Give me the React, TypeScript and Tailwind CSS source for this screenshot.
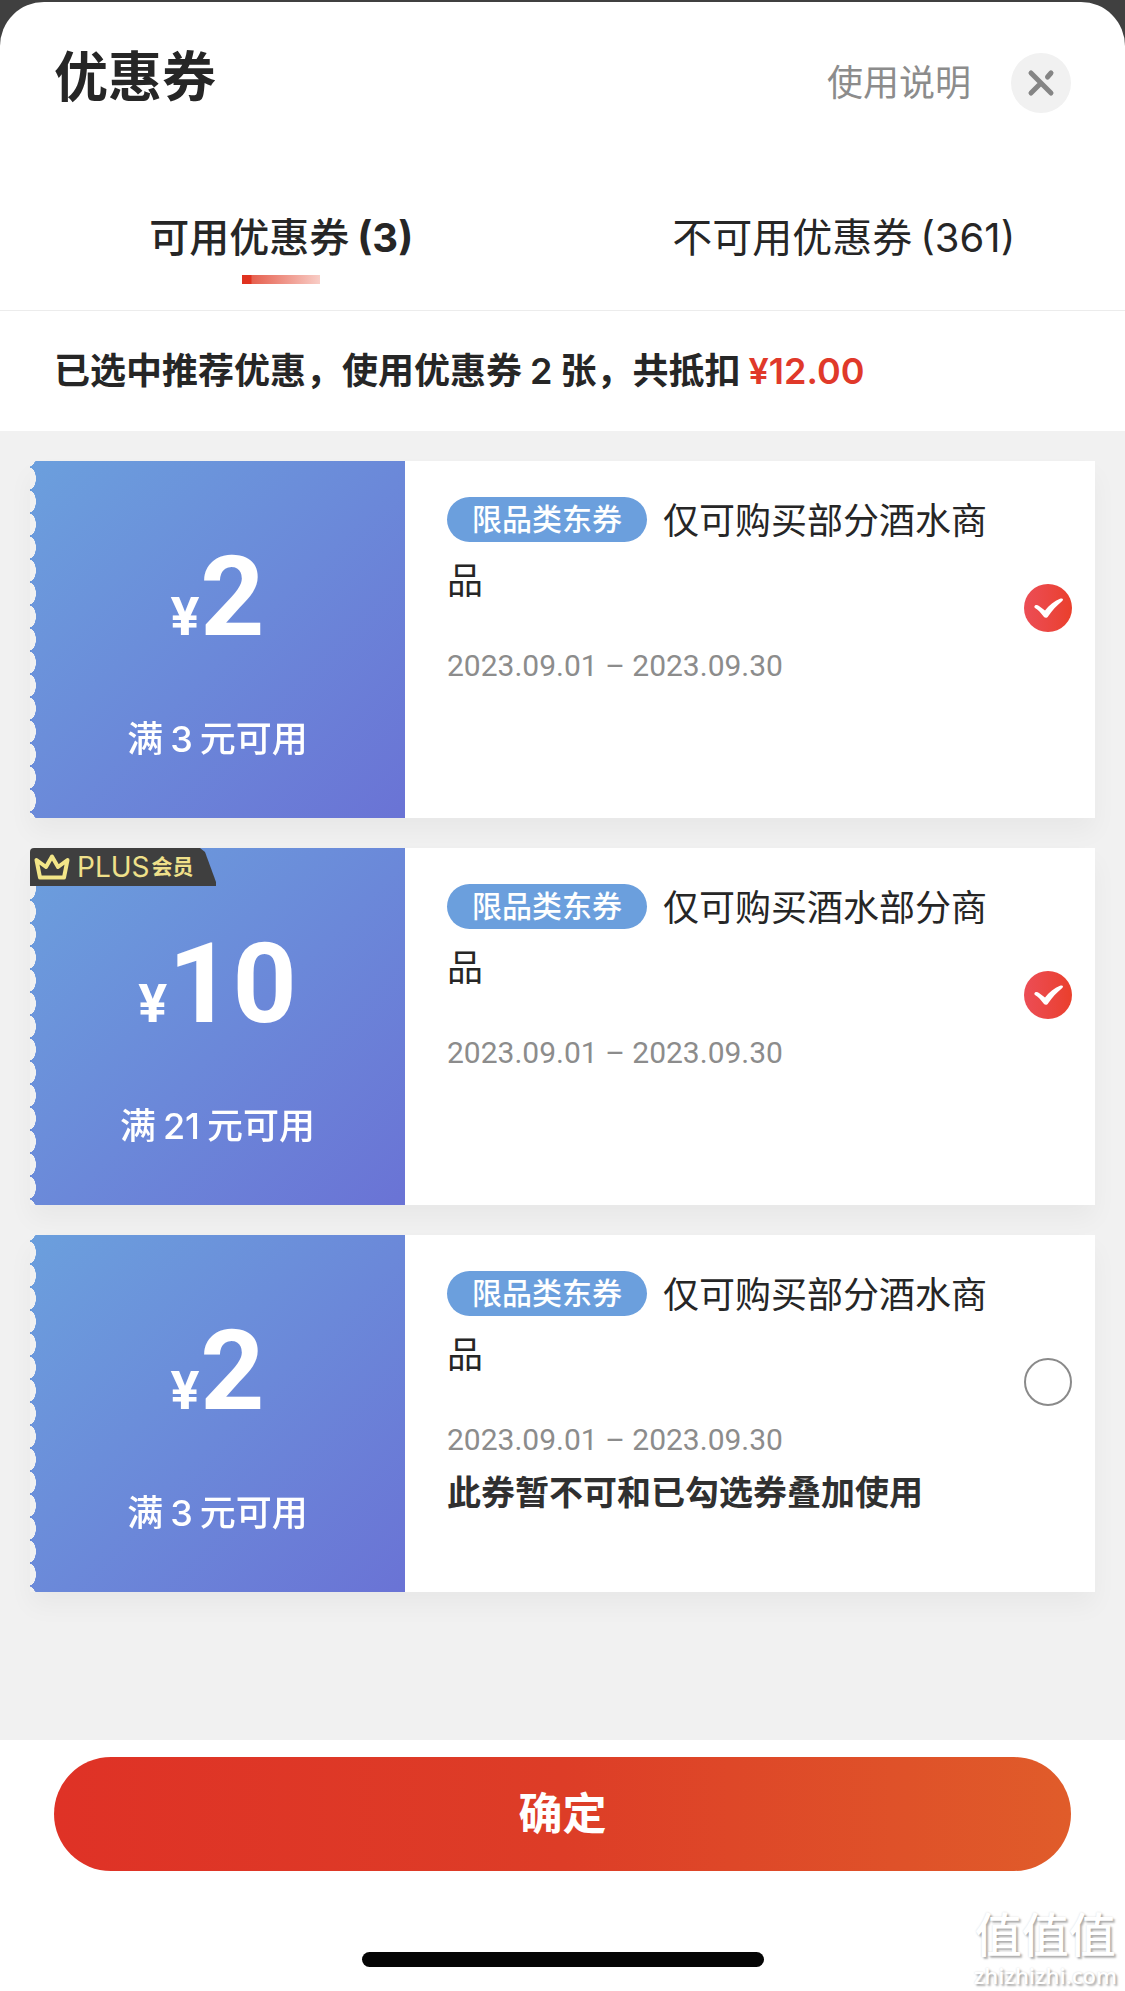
import { useState } from "react";

type Coupon = {
  id: number;
  amount: string;
  threshold: string;
  title: string;
  plus?: boolean;
  note?: string;
};

const coupons: Coupon[] = [
  { id: 1, amount: "2", threshold: "3", title: "仅可购买部分酒水商品" },
  { id: 2, amount: "10", threshold: "21", title: "仅可购买酒水部分商品", plus: true },
  { id: 3, amount: "2", threshold: "3", title: "仅可购买部分酒水商品", note: "此券暂不可和已勾选券叠加使用" },
];

const tabs = [
  { label: "可用优惠券", count: 3 },
  { label: "不可用优惠券", count: 361 },
];

function PlusBadge() {
  return (
    <div className="absolute top-0 left-0 flex h-[38px] w-[186px] items-center gap-[7px] rounded-tl bg-[#3f3f3f] pl-1 text-[#efe08a] [clip-path:polygon(0_0,170px_0,175px_4px,186px_34px,186px_38px,0_38px)]">
      <svg className="h-7 w-9 shrink-0" viewBox="0 0 36 28" fill="none" stroke="#f3e688" strokeWidth="4" strokeLinejoin="round" aria-hidden="true">
        <path d="M2.5 7 L6 24.5 H30 L33.5 7 L24 14 L18 3.5 L12 14 Z" />
      </svg>
      <span className="flex items-center gap-[2px] whitespace-nowrap">
        <span className="text-[28px] leading-8">PLUS</span>
        <span className="text-[21px] leading-8 font-bold">会员</span>
      </span>
    </div>
  );
}

function Check({ id, checked, onChange }: { id: string; checked: boolean; onChange: () => void }) {
  return (
    <span className="relative mt-[123px] mr-[23px] block size-12 shrink-0">
      <input
        id={id}
        type="checkbox"
        checked={checked}
        onChange={onChange}
        className="peer block size-12 cursor-pointer appearance-none rounded-full border-[2px] border-[#8a8a8a] bg-white checked:border-0 checked:bg-linear-to-r checked:from-[#ec4d55] checked:to-[#ea3f2b]"
      />
      <svg className="pointer-events-none absolute inset-0 hidden size-12 peer-checked:block" viewBox="0 0 48 48" aria-hidden="true">
        <path
          d="M10.4 22.2 C11.4 20.4 13.4 20.8 15 22 L21 26.6 C25 21.5 30.5 17 36 14.8 C38.8 13.8 40 15.4 38 17.2 C32.5 21.6 28 26.6 24.2 32.2 C22.8 34.4 20.4 34.2 19 31.8 C16.6 28.4 14 26 11 24 C10.4 23.4 10.2 22.8 10.4 22.2 Z"
          fill="#fff"
        />
      </svg>
    </span>
  );
}

function CouponCard({ coupon, checked, onToggle }: { coupon: Coupon; checked: boolean; onToggle: () => void }) {
  const id = `coupon-${coupon.id}`;
  return (
    <li className="relative flex min-h-[357px] shadow-[0_14px_24px_rgba(0,0,0,0.04)]">
      <div className="flex w-[375px] shrink-0 flex-col items-center rounded-l-md bg-linear-135 from-[#6b9fdd] to-[#6a73d5] pt-[82px] text-white [mask-image:radial-gradient(ellipse_6px_11px_at_0_50%,transparent_94%,black_100%)] [mask-position:0_center] [mask-size:100%_23px]">
        <p className="flex items-baseline gap-px font-[Roboto] leading-[108px] font-bold">
          <span className="text-[54px]">¥</span>
          <span className="text-[112px]">{coupon.amount}</span>
        </p>
        <p className="mt-10 flex items-center gap-[7px] text-[36px] leading-[56px] font-medium">
          <span>满</span>
          <span>{coupon.threshold}</span>
          <span>元可用</span>
        </p>
      </div>
      {coupon.plus && <PlusBadge />}
      <div className="flex flex-1 items-start bg-white">
        <div className="flex-1 pt-[30px] pl-[42px] pr-6">
          <label htmlFor={id} className="block text-[36px] leading-[60px] text-[#262626]">
            <span className="mr-4 inline-block h-[45px] rounded-full bg-[#6b9fdd] px-[25px] align-[4px] text-[30px] leading-[45px] font-medium text-white">
              限品类东券
            </span>
            {coupon.title}
          </label>
          <p className="mt-[33px] font-[Roboto] text-[30px] leading-[44px] text-[#8c8c8c]">2023.09.01 – 2023.09.30</p>
          {coupon.note && <p className="mt-1 text-[34px] leading-[54px] font-bold text-[#303030]">{coupon.note}</p>}
        </div>
        <Check id={id} checked={checked} onChange={onToggle} />
      </div>
    </li>
  );
}

export default function App() {
  const [selected, setSelected] = useState<number[]>([1, 2]);
  const [tab, setTab] = useState(0);
  const toggle = (id: number) =>
    setSelected((s) => (s.includes(id) ? s.filter((x) => x !== id) : [...s, id]));

  return (
    <div className="min-h-screen bg-[#404040] pt-[2px] font-['Inter','Noto_Sans_CJK_SC',sans-serif] text-[#262626]">
      <main className="relative flex min-h-[calc(100vh-2px)] flex-col overflow-hidden rounded-t-[44px] bg-white">
        <header className="flex h-[164px] items-start justify-between pr-[54px] pl-[54px]">
          <h1 className="pt-[38px] text-[54px] leading-[76px] font-bold">优惠券</h1>
          <div className="flex items-center gap-10 pt-[51px]">
            <a href="#help" className="text-[36px] leading-[60px] text-[#8c8c8c]">使用说明</a>
            <button type="button" aria-label="关闭" className="flex size-[60px] items-center justify-center rounded-full bg-[#f1f1f1]">
              <svg className="size-7" viewBox="0 0 28 28" fill="none" stroke="#858585" strokeWidth="5" strokeLinecap="round" aria-hidden="true">
                <path d="M4 4 L24 24 M4 24 L14 14 M20.5 8 L24 4" />
              </svg>
            </button>
          </div>
        </header>

        <div role="tablist" className="flex h-[145px] border-b border-[#ececec]">
          {tabs.map((t, i) => (
            <button
              key={t.label}
              type="button"
              role="tab"
              aria-selected={tab === i}
              onClick={() => setTab(i)}
              className="group flex flex-1 cursor-pointer flex-col items-center pt-[42px] text-[40px] leading-[60px]"
            >
              <span className="flex gap-2">
                <span className="group-aria-selected:font-medium">{t.label}</span>
                <span className="group-aria-selected:font-bold">({t.count})</span>
              </span>
              {tab === i && <span className="mt-[7px] h-[9px] w-[78px] bg-[linear-gradient(90deg,#e0321f_0,#e0321f_9px,#e6604f_10px,#f8cdc6_100%)]" />}
            </button>
          ))}
        </div>

        <p className="flex h-[120px] items-center px-[54px] text-[36px] leading-[56px] font-bold">
          <span>已选中推荐优惠，使用优惠券</span>
          <span className="mx-2 font-semibold">2</span>
          <span>张，共抵扣</span>
          <span className="ml-2 font-semibold text-[#e0392a]">¥12.00</span>
        </p>

        <section className="flex-1 bg-[#f1f1f1] px-[30px] pt-[30px]">
          <ul className="flex flex-col gap-[30px]">
            {coupons.map((c) => (
              <CouponCard key={c.id} coupon={c} checked={selected.includes(c.id)} onToggle={() => toggle(c.id)} />
            ))}
          </ul>
        </section>

        <footer className="flex flex-col items-center px-[54px] pt-[17px] pb-6">
          <button
            type="button"
            className="h-[114px] w-full cursor-pointer rounded-full bg-[linear-gradient(90deg,#df3226_0%,#dd3d27_50%,#e05c2a_100%)] text-[44px] font-bold text-white"
          >
            确定
          </button>
          <div className="mt-[81px] h-[15px] w-[402px] rounded-full bg-[#050505]" />
        </footer>

        <div className="pointer-events-none absolute right-2 bottom-1 text-center text-white [text-shadow:2px_2px_2px_rgba(0,0,0,0.3),0_0_2px_rgba(0,0,0,0.15)]">
          <p className="text-[47px] leading-[56px] font-medium">值值值</p>
          <p className="font-['Open_Sans'] text-[22px] leading-6 font-semibold">zhizhizhi.com</p>
        </div>
      </main>
    </div>
  );
}
